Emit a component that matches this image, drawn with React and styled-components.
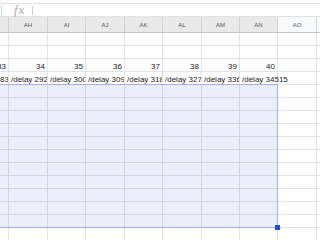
import React from "react";
import styled, { createGlobalStyle } from "styled-components";

const GlobalStyle = createGlobalStyle`
  html, body { margin: 0; padding: 0; background: #ffffff; overflow: hidden; }
  body { font-family: "Liberation Sans", Arial, sans-serif; }
  * { box-sizing: border-box; }
`;

const COLS = [
  { name: "AG", w: 39, sel: true },
  { name: "AH", w: 39, sel: true },
  { name: "AI", w: 38, sel: true },
  { name: "AJ", w: 39, sel: true },
  { name: "AK", w: 38, sel: true },
  { name: "AL", w: 39, sel: true },
  { name: "AM", w: 38, sel: true },
  { name: "AN", w: 38, sel: true },
  { name: "AO", w: 39, sel: false },
  { name: "AP", w: 100, sel: false },
];
const template = COLS.map((c) => `${c.w}px`).join(" ");

const numbers = ["33", "34", "35", "36", "37", "38", "39", "40", "", ""];
const delays = [
  "/delay 283",
  "/delay 292",
  "/delay 300",
  "/delay 309",
  "/delay 318",
  "/delay 327",
  "/delay 336",
  "/delay 34515",
  "",
  "",
];

const Sheet = styled.div`
  width: 320px;
  height: 240px;
  overflow: hidden;
  background: #fff;
`;

const TopStrip = styled.div`
  height: 4px;
  border-bottom: 1px solid #e2e2e2;
  background: #ffffff;
`;

const FormulaBar = styled.div`
  display: flex;
  align-items: center;
  height: 13px;
  border-bottom: 1px solid #e2e2e2;
`;

const Divider = styled.div`
  width: 1px;
  height: 9px;
  background: #cdcdcd;
  margin-left: ${(p) => p.$gap}px;
`;

const FxLabel = styled.span`
  font-family: "Liberation Serif", "Times New Roman", serif;
  font-style: italic;
  font-size: 13px;
  line-height: 12px;
  color: #a9a9a9;
  margin-left: 12px;
  letter-spacing: 1px;
`;

const Viewport = styled.div`
  overflow: hidden;
  width: 320px;
`;

const Scroller = styled.div`
  margin-left: -30px;
  width: 420px;
`;

const HeaderRow = styled.div`
  display: grid;
  grid-template-columns: ${template};
  height: 16px;
  border-bottom: 1px solid #c6c6c6;
`;

const HeaderCell = styled.div`
  display: flex;
  align-items: center;
  justify-content: center;
  background: ${(p) => (p.$sel ? "#e9e9e9" : "#f8f9fa")};
  border-right: 1px solid #d2d2d2;
  font-size: 6px;
  color: #555555;
  padding-top: 1px;
`;

const Body = styled.div`
  position: relative;
`;

const Row = styled.div`
  display: grid;
  grid-template-columns: ${template};
  height: 13px;
`;

const Cell = styled.div`
  display: flex;
  align-items: flex-end;
  justify-content: ${(p) => (p.$align === "right" ? "flex-end" : "flex-start")};
  padding: 0 2px 0 2px;
  border-right: 1px solid #e2e3e3;
  border-bottom: 1px solid #e2e3e3;
  overflow: ${(p) => (p.$spill ? "visible" : "hidden")};
  white-space: nowrap;
  font-size: 8px;
  line-height: 9px;
  color: #222222;
  position: ${(p) => (p.$spill ? "relative" : "static")};
  z-index: ${(p) => (p.$spill ? 1 : "auto")};
`;

const Selection = styled.div`
  position: absolute;
  left: -4px;
  top: 51px;
  width: 312px;
  height: 144px;
  border: 1px solid #a3b0f3;
  background: rgba(66, 85, 230, 0.1);
  pointer-events: none;
  z-index: 2;
`;

const FillHandle = styled.div`
  position: absolute;
  right: -3px;
  bottom: -3px;
  width: 5px;
  height: 5px;
  background: #1d4fe4;
`;

export default function App() {
  const rows = Array.from({ length: 16 }, (_, r) => r);
  return (
    <>
      <GlobalStyle />
      <Sheet>
        <TopStrip />
        <FormulaBar>
          <Divider $gap={1} />
          <FxLabel>fx</FxLabel>
          <Divider $gap={7} />
        </FormulaBar>
        <Viewport>
          <Scroller>
            <HeaderRow>
              {COLS.map((c) => (
                <HeaderCell key={c.name} $sel={c.sel}>
                  {c.name}
                </HeaderCell>
              ))}
            </HeaderRow>
            <Body>
              {rows.map((r) => (
                <Row key={r}>
                  {COLS.map((c, i) => {
                    if (r === 2) {
                      return (
                        <Cell key={c.name} $align="right">
                          {numbers[i]}
                        </Cell>
                      );
                    }
                    if (r === 3) {
                      return (
                        <Cell key={c.name} $spill={c.name === "AN"}>
                          {delays[i]}
                        </Cell>
                      );
                    }
                    return <Cell key={c.name} />;
                  })}
                </Row>
              ))}
              <Selection>
                <FillHandle />
              </Selection>
            </Body>
          </Scroller>
        </Viewport>
      </Sheet>
    </>
  );
}
